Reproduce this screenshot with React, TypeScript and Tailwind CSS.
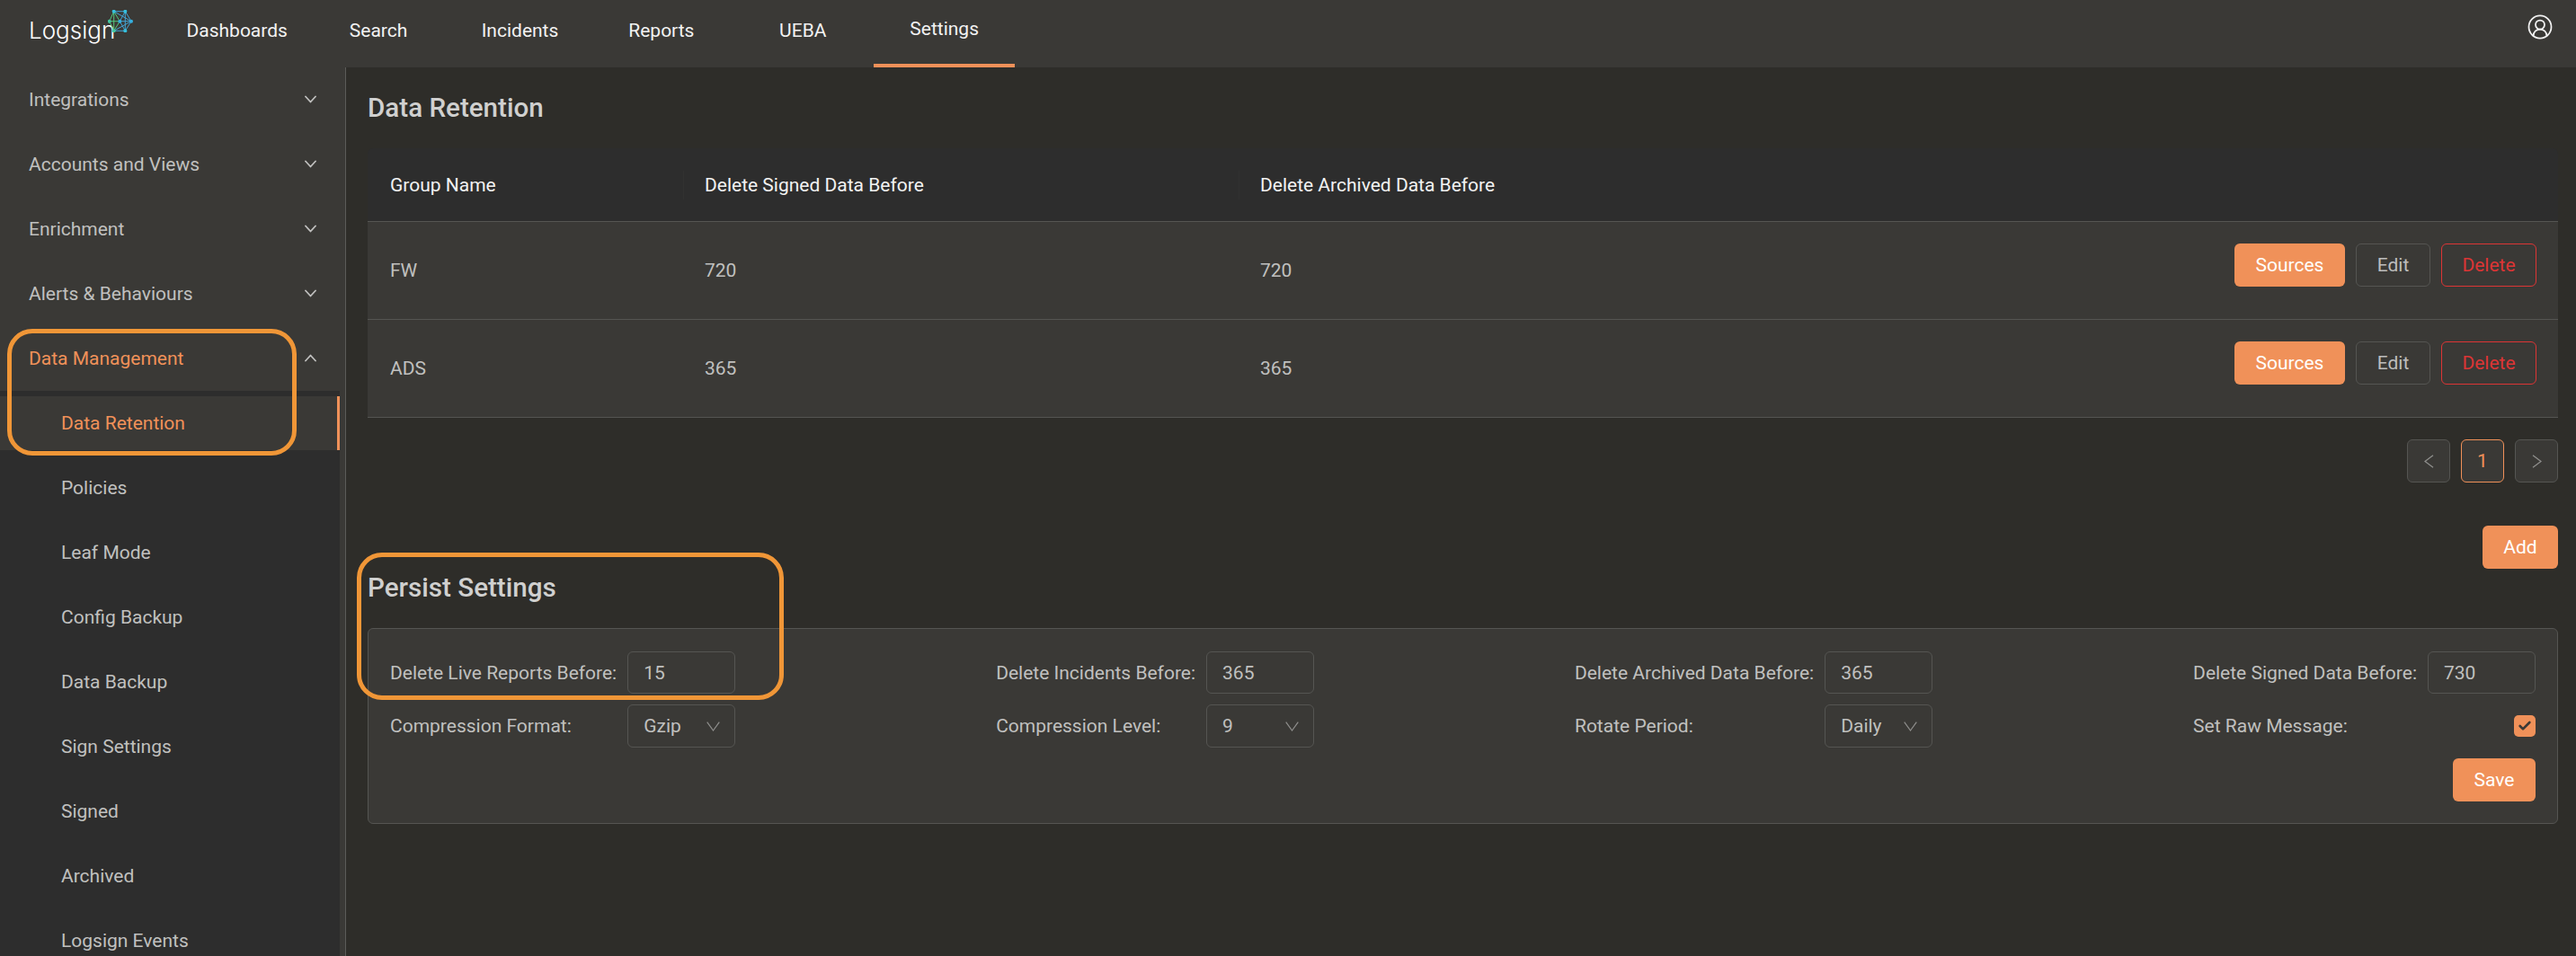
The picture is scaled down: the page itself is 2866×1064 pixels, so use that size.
import React from "react";
import { CircleUserRound, Check } from "lucide-react";

const tabs = ["Dashboards", "Search", "Incidents", "Reports", "UEBA", "Settings"];
const groups = ["Integrations", "Accounts and Views", "Enrichment", "Alerts & Behaviours"];
const subs = ["Policies", "Leaf Mode", "Config Backup", "Data Backup", "Sign Settings", "Signed", "Archived", "Logsign Events"];

function Logo() {
  const nodes: [number, number, string][] = [
    [6.7, 1.7, "#35bfdc"], [19.3, 1.7, "#35bfdc"], [26, 12.7, "#35b0e0"], [19.3, 23.3, "#35bfdc"],
    [6.7, 23.3, "#44c6a0"], [1.7, 12.7, "#44c6a0"], [13.3, 12.7, "#35b0e0"],
  ];
  return (
    <div className="relative h-[75px] w-[185px] shrink-0">
      <span className="absolute left-[32px] top-[16px] font-['Inter',sans-serif] text-[26px] font-light leading-[36px] text-white">
        Logsign
      </span>
      <svg className="absolute left-[120px] top-[11px]" width="28" height="25" viewBox="0 0 28 25" fill="none">
        <path d="M6.7 1.7 L1.7 12.7 L6.7 23.3 M1.7 12.7 H13.3 M6.7 1.7 L13.3 12.7 L6.7 23.3 M6.7 1.7 V23.3" stroke="#52c47c" strokeWidth="1" />
        <path d="M6.7 1.7 H19.3 L26 12.7 L19.3 23.3 H6.7 M13.3 12.7 H26 M19.3 1.7 L13.3 12.7 L19.3 23.3 M19.3 1.7 V23.3 M6.7 1.7 L26 12.7 M6.7 23.3 L26 12.7" stroke="#42a3d4" strokeWidth="1" />
        {nodes.map(([x, y, c], i) => (
          <circle key={i} cx={x} cy={y} r="2" fill={c} />
        ))}
      </svg>
    </div>
  );
}

function Chevron({ up }: { up?: boolean }) {
  return (
    <svg width="13" height="9" viewBox="0 0 13 9" fill="none" className="-translate-y-[1px]">
      <polyline
        points={up ? "1,7.5 6.5,1.5 12,7.5" : "1,1.5 6.5,7.5 12,1.5"}
        stroke="#c0c0bf"
        strokeWidth="1.8"
        strokeLinecap="round"
        strokeLinejoin="round"
      />
    </svg>
  );
}

function ThinDown() {
  return (
    <svg width="15" height="11" viewBox="0 0 15 11" fill="none">
      <polyline points="0.7,0.7 7.5,10 14.3,0.7" stroke="#8f8f8d" strokeWidth="1.2" />
    </svg>
  );
}

function PageArrow({ right }: { right?: boolean }) {
  return (
    <svg width="11" height="15" viewBox="0 0 11 15" fill="none">
      <polyline points={right ? "1,0.7 10,7.5 1,14.3" : "10,0.7 1,7.5 10,14.3"} stroke="#8f8f8d" strokeWidth="1.3" />
    </svg>
  );
}

function Btn({ children, w }: { children: React.ReactNode; w: string }) {
  return (
    <button className={`flex h-12 items-center justify-center rounded-md bg-[#f09159] text-white ${w}`}>
      {children}
    </button>
  );
}

function Row({ name, a, b }: { name: string; a: string; b: string }) {
  return (
    <div className="flex h-[109px] items-center border-b border-[#555552] text-[#c0c0bf]">
      <div className="w-[375px] pl-[25px]">{name}</div>
      <div className="w-[618px]">{a}</div>
      <div>{b}</div>
      <div className="ml-auto flex gap-3 pb-3 pr-6">
        <Btn w="w-[123px]">Sources</Btn>
        <button className="h-12 w-[83px] rounded-md border border-[#555552] text-[#bdbdbd]">Edit</button>
        <button className="h-12 w-[106px] rounded-md border border-[#dc3535] text-[#dc3535]">Delete</button>
      </div>
    </div>
  );
}

function Select({ value }: { value: string }) {
  return (
    <div className="flex h-12 items-center justify-between rounded-md border border-[#555552] pl-[17px] pr-[16px] text-[#c0c0bf]">
      <span>{value}</span>
      <ThinDown />
    </div>
  );
}

function Input({ value }: { value: string }) {
  return (
    <div className="flex h-[47px] items-center rounded-md border border-[#555552] pl-[17px] text-[#c0c0bf]">
      {value}
    </div>
  );
}

function Col({ l1, v1, l2, v2 }: { l1: string; v1: string; l2: string; v2: string }) {
  return (
    <div className="grid grid-cols-[auto_120px] items-center gap-x-3 gap-y-3 text-[#c0c0bf]">
      <span>{l1}</span>
      <Input value={v1} />
      <span>{l2}</span>
      <Select value={v2} />
    </div>
  );
}

export default function App() {
  return (
    <div className="relative flex h-[1064px] w-[2866px] flex-col overflow-hidden bg-[#2e2d29] font-['Roboto',sans-serif] text-[21px] leading-[28px]">
      <header className="flex h-[75px] shrink-0 items-stretch bg-[#3a3936] text-[#f2f2f2]">
        <Logo />
        {tabs.map((t) => (
          <div
            key={t}
            className={`flex w-[157.4px] items-center justify-center pb-[8px] ${t === "Settings" ? "border-b-4 border-[#f09159]" : ""}`}
          >
            {t}
          </div>
        ))}
        <div className="ml-auto flex items-center pb-[15px] pr-[25px]">
          <CircleUserRound size={30} strokeWidth={1.4} />
        </div>
      </header>
      <div className="flex min-h-0 flex-1">
        <aside className="w-[385px] shrink-0 overflow-hidden border-r border-[#5c5c59] bg-[#3a3936] text-[#c0c0bf]">
          {groups.map((g) => (
            <div key={g} className="flex h-[72px] items-center justify-between pl-8 pr-[32px]">
              <span>{g}</span>
              <Chevron />
            </div>
          ))}
          <div className="flex h-[72px] items-center justify-between pl-8 pr-[32px] text-[#f09159]">
            <span>Data Management</span>
            <Chevron up />
          </div>
          <div className="w-[378px] bg-[#2d2d2d] pb-2 pt-[6px]">
            <div className="mb-3 flex h-[60px] items-center border-r-[3px] border-[#f09159] bg-[#3a3936] pl-[68px] text-[#f09159]">
              Data Retention
            </div>
            {subs.map((s) => (
              <div key={s} className="mb-3 flex h-[60px] items-center pl-[68px]">
                {s}
              </div>
            ))}
          </div>
        </aside>
        <main className="min-w-0 flex-1 pl-6 pr-5">
          <h1 className="flex h-[90px] items-center text-[29.6px] font-medium text-[#d0d0cf]">Data Retention</h1>
          <div className="overflow-hidden rounded-t-md">
            <div className="flex h-[82px] items-center border-b border-[#555552] bg-[#2d2d2d] text-[#f2f2f2]">
              <div className="w-[351px] pl-[25px]">Group Name</div>
              <div className="h-8 w-px bg-[#313130]" />
              <div className="w-[617px] pl-[23px]">Delete Signed Data Before</div>
              <div className="h-8 w-px bg-[#313130]" />
              <div className="pl-[23px]">Delete Archived Data Before</div>
            </div>
            <div className="bg-[#3a3936]">
              <Row name="FW" a="720" b="720" />
              <Row name="ADS" a="365" b="365" />
            </div>
          </div>
          <div className="mt-6 flex justify-end gap-3 text-[#c0c0bf]">
            <button className="flex h-12 w-12 items-center justify-center rounded-md border border-[#555552] bg-[#3a3936]">
              <PageArrow />
            </button>
            <button className="flex h-12 w-12 items-center justify-center rounded-md border border-[#f09159] bg-[#3a3936] text-[#f09159]">
              1
            </button>
            <button className="flex h-12 w-12 items-center justify-center rounded-md border border-[#555552] bg-[#3a3936]">
              <PageArrow right />
            </button>
          </div>
          <div className="mt-12 flex justify-end">
            <Btn w="w-[84px]">Add</Btn>
          </div>
          <h2 className="flex h-[66px] items-center pb-[25px] text-[29.6px] font-medium leading-[36px] text-[#d0d0cf]">Persist Settings</h2>
          <div className="h-[218px] rounded-md border border-[#555552] bg-[#3a3936] px-6 pt-[25px]">
            <div className="flex justify-between">
              <Col l1="Delete Live Reports Before:" v1="15" l2="Compression Format:" v2="Gzip" />
              <Col l1="Delete Incidents Before:" v1="365" l2="Compression Level:" v2="9" />
              <Col l1="Delete Archived Data Before:" v1="365" l2="Rotate Period:" v2="Daily" />
              <div className="grid grid-cols-[auto_120px] items-center gap-x-3 gap-y-3 text-[#c0c0bf]">
                <span>Delete Signed Data Before:</span>
                <Input value="730" />
                <span>Set Raw Message:</span>
                <div className="flex h-12 items-center justify-end">
                  <div className="flex h-6 w-6 items-center justify-center rounded-[5px] bg-[#f09159] text-[#3a3936]">
                    <Check size={16} strokeWidth={4} />
                  </div>
                </div>
              </div>
            </div>
            <div className="mt-3 flex justify-end">
              <Btn w="w-[92px]">Save</Btn>
            </div>
          </div>
        </main>
      </div>
      <div className="absolute left-[8px] top-[366px] h-[141px] w-[322px] rounded-[28px] border-[5px] border-[#f09637]" />
      <div className="absolute left-[397px] top-[615px] h-[164px] w-[475px] rounded-[28px] border-[5px] border-[#f09637]" />
    </div>
  );
}
